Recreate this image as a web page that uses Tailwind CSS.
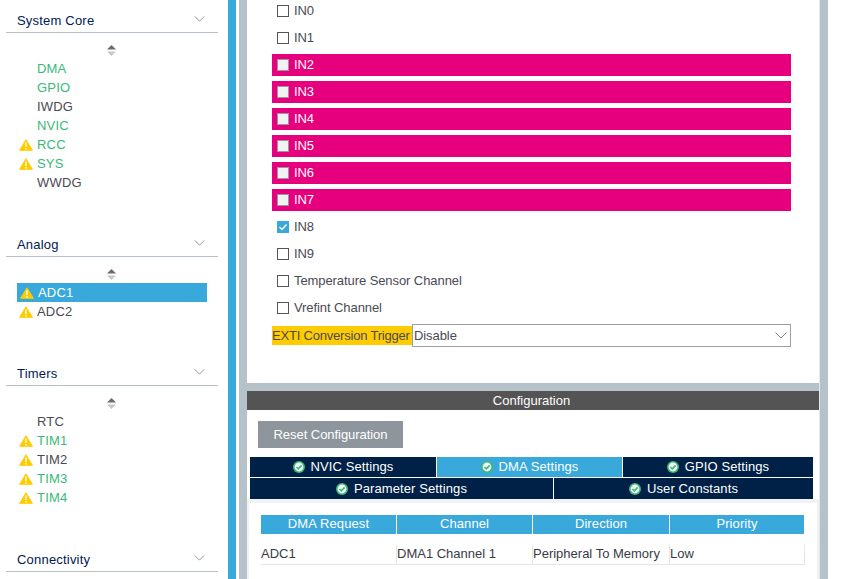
<!DOCTYPE html>
<html lang="en">
<head>
  <meta charset="UTF-8">
  <title>Pinout and Configuration</title>
  <script src="https://cdn.jsdelivr.net/npm/@tailwindcss/browser@4"></script>
</head>
<body class="bg-white font-['Liberation_Sans',Arial,sans-serif] text-[13px] text-[#4a4a55]">
  <svg width="0" height="0" class="absolute">
    <defs>
      <symbol id="warn" viewBox="0 0 14 12">
        <path d="M7 0.8 L13.4 11.3 L0.6 11.3 Z" fill="#ffcc00" stroke="#ffcc00" stroke-linejoin="round"/>
        <path d="M7 3.5 V8" stroke="#fff" stroke-width="1.4"/>
        <path d="M7 9 V10.4" stroke="#fff" stroke-width="1.4"/>
      </symbol>
      <symbol id="ok" viewBox="0 0 12 12">
        <circle cx="6" cy="6" r="6" fill="#3cb878"/>
        <circle cx="6" cy="6" r="4.4" fill="#f4fbf7"/>
        <path d="M3.4 6 L5.3 7.9 L8.7 4.4" fill="none" stroke="#3cb878" stroke-width="1.6"/>
      </symbol>
      <symbol id="chev" viewBox="0 0 12 7">
        <path d="M0.5 0.5 L6 6 L11.5 0.5" fill="none" stroke="#7b8a96" stroke-width="1"/>
      </symbol>
      <symbol id="spin" viewBox="0 0 9 11">
        <path d="M4.5 0 L9 4.5 H0 Z" fill="#6b6b6b"/>
        <path d="M4.5 11 L9 6.5 H0 Z" fill="#c4c8cc"/>
      </symbol>
    </defs>
  </svg>

  <div class="flex h-[579px] w-[854px] overflow-hidden">
    <!-- left category list -->
    <aside class="w-[228px] shrink-0 pl-[6px] pr-[10px] tracking-[0.2px]">
      <section class="h-[33px] flex items-center justify-between border-b border-[#b5c0c8] pt-[9px] pl-[11px] pr-[13px] text-[#002052]">
        <span>System Core</span>
        <svg class="w-[11px] h-[6px] mb-[4px]"><use href="#chev"/></svg>
      </section>
      <div class="h-[191px]">
        <div class="flex justify-center pt-[12px] pb-[3px] pr-[2px]"><svg class="w-[9px] h-[11px]"><use href="#spin"/></svg></div>
        <ul class="pl-[13px] leading-[19px]">
          <li class="pl-[18px] text-[#3cb878]">DMA</li>
          <li class="pl-[18px] text-[#3cb878]">GPIO</li>
          <li class="pl-[18px]">IWDG</li>
          <li class="pl-[18px] text-[#3cb878]">NVIC</li>
          <li class="flex items-center gap-[4px] text-[#3cb878]"><svg class="w-[14px] h-[12px]"><use href="#warn"/></svg>RCC</li>
          <li class="flex items-center gap-[4px] text-[#3cb878]"><svg class="w-[14px] h-[12px]"><use href="#warn"/></svg>SYS</li>
          <li class="pl-[18px]">WWDG</li>
        </ul>
      </div>

      <section class="h-[33px] flex items-center justify-between border-b border-[#b5c0c8] pt-[9px] pl-[11px] pr-[13px] text-[#002052]">
        <span>Analog</span>
        <svg class="w-[11px] h-[6px] mb-[4px]"><use href="#chev"/></svg>
      </section>
      <div class="h-[96px]">
        <div class="flex justify-center pt-[12px] pb-[3px] pr-[2px]"><svg class="w-[9px] h-[11px]"><use href="#spin"/></svg></div>
        <ul class="pl-[11px] pr-[11px] leading-[19px]">
          <li class="flex items-center gap-[4px] bg-[#39a9dc] text-white pl-[3px]"><svg class="w-[14px] h-[12px]"><use href="#warn"/></svg>ADC1</li>
          <li class="flex items-center gap-[4px] pl-[2px]"><svg class="w-[14px] h-[12px]"><use href="#warn"/></svg>ADC2</li>
        </ul>
      </div>

      <section class="h-[33px] flex items-center justify-between border-b border-[#b5c0c8] pt-[9px] pl-[11px] pr-[13px] text-[#002052]">
        <span>Timers</span>
        <svg class="w-[11px] h-[6px] mb-[4px]"><use href="#chev"/></svg>
      </section>
      <div class="h-[153px]">
        <div class="flex justify-center pt-[12px] pb-[3px] pr-[2px]"><svg class="w-[9px] h-[11px]"><use href="#spin"/></svg></div>
        <ul class="pl-[13px] leading-[19px]">
          <li class="pl-[18px]">RTC</li>
          <li class="flex items-center gap-[4px] text-[#3cb878]"><svg class="w-[14px] h-[12px]"><use href="#warn"/></svg>TIM1</li>
          <li class="flex items-center gap-[4px]"><svg class="w-[14px] h-[12px]"><use href="#warn"/></svg>TIM2</li>
          <li class="flex items-center gap-[4px] text-[#3cb878]"><svg class="w-[14px] h-[12px]"><use href="#warn"/></svg>TIM3</li>
          <li class="flex items-center gap-[4px] text-[#3cb878]"><svg class="w-[14px] h-[12px]"><use href="#warn"/></svg>TIM4</li>
        </ul>
      </div>

      <section class="h-[33px] flex items-center justify-between border-b border-[#b5c0c8] pt-[9px] pl-[11px] pr-[13px] text-[#002052]">
        <span>Connectivity</span>
        <svg class="w-[11px] h-[6px] mb-[4px]"><use href="#chev"/></svg>
      </section>
    </aside>

    <div class="w-[8px] shrink-0 bg-[#39a9dc]"></div>
    <div class="w-[3px] shrink-0"></div>
    <div class="w-[8px] shrink-0 bg-[#b5c2ca]"></div>

    <main class="w-[573px] shrink-0 flex flex-col border-r border-[#e4e8ea]">
      <!-- mode panel -->
      <div class="h-[383px] pl-[25px] pr-[28px] overflow-hidden tracking-[-0.08px]">
        <div class="flex flex-col gap-[5px]">
          <label class="h-[22px] flex items-center gap-[5px] pl-[5px]"><span class="w-[12px] h-[12px] border border-[#555]"></span>IN0</label>
          <label class="h-[22px] flex items-center gap-[5px] pl-[5px]"><span class="w-[12px] h-[12px] border border-[#555]"></span>IN1</label>
          <label class="h-[22px] flex items-center gap-[5px] pl-[5px] bg-[#e6007e] text-white"><span class="w-[12px] h-[12px] border border-[#999] bg-[#f0f2f4]"></span>IN2</label>
          <label class="h-[22px] flex items-center gap-[5px] pl-[5px] bg-[#e6007e] text-white"><span class="w-[12px] h-[12px] border border-[#999] bg-[#f0f2f4]"></span>IN3</label>
          <label class="h-[22px] flex items-center gap-[5px] pl-[5px] bg-[#e6007e] text-white"><span class="w-[12px] h-[12px] border border-[#999] bg-[#f0f2f4]"></span>IN4</label>
          <label class="h-[22px] flex items-center gap-[5px] pl-[5px] bg-[#e6007e] text-white"><span class="w-[12px] h-[12px] border border-[#999] bg-[#f0f2f4]"></span>IN5</label>
          <label class="h-[22px] flex items-center gap-[5px] pl-[5px] bg-[#e6007e] text-white"><span class="w-[12px] h-[12px] border border-[#999] bg-[#f0f2f4]"></span>IN6</label>
          <label class="h-[22px] flex items-center gap-[5px] pl-[5px] bg-[#e6007e] text-white"><span class="w-[12px] h-[12px] border border-[#999] bg-[#f0f2f4]"></span>IN7</label>
          <label class="h-[22px] flex items-center gap-[5px] pl-[5px]">
            <span class="w-[12px] h-[12px] bg-[#39a9dc] flex items-center justify-center">
              <svg width="10" height="10" viewBox="0 0 10 10"><path d="M1.5 5 L4 7.5 L8.5 2.5" fill="none" stroke="#fff" stroke-width="1.4"/></svg>
            </span>IN8</label>
          <label class="h-[22px] flex items-center gap-[5px] pl-[5px]"><span class="w-[12px] h-[12px] border border-[#555]"></span>IN9</label>
          <label class="h-[22px] flex items-center gap-[5px] pl-[5px]"><span class="w-[12px] h-[12px] border border-[#555]"></span>Temperature Sensor Channel</label>
          <label class="h-[22px] flex items-center gap-[5px] pl-[5px]"><span class="w-[12px] h-[12px] border border-[#555]"></span>Vrefint Channel</label>
        </div>
        <div class="flex items-center mt-[5px]">
          <span class="w-[140px] h-[19px] leading-[19px] bg-[#ffcc00] whitespace-nowrap tracking-[-0.2px]">EXTI Conversion Trigger</span>
          <div class="flex-1 h-[23px] border border-[#9aa0a4] flex items-center justify-between pl-[1px] pr-[3px]">
            <span>Disable</span>
            <svg class="w-[12px] h-[7px]"><use href="#chev"/></svg>
          </div>
        </div>
      </div>

      <div class="h-[8px] bg-[#b5c2ca]"></div>

      <!-- configuration panel -->
      <div class="h-[19px] leading-[19px] bg-[#545454] text-white text-center pr-[3px]">Configuration</div>
      <div class="pt-[11px] pl-[11px]">
        <button class="block w-[145px] h-[27px] bg-[#8e959c] text-white tracking-[-0.05px]">Reset Configuration</button>
      </div>
      <div class="mt-[9px] pl-[3px] pr-[6px] flex flex-col gap-[1px] text-white tracking-[0.1px]">
        <div class="flex gap-[1px] h-[20px]">
          <div class="w-[186px] bg-[#002147] flex items-center justify-center gap-[6px]"><svg class="w-[12px] h-[12px]"><use href="#ok"/></svg>NVIC Settings</div>
          <div class="w-[185px] bg-[#39a9dc] flex items-center justify-center gap-[6px]"><svg class="w-[12px] h-[12px]"><use href="#ok"/></svg>DMA Settings</div>
          <div class="flex-1 bg-[#002147] flex items-center justify-center gap-[6px]"><svg class="w-[12px] h-[12px]"><use href="#ok"/></svg>GPIO Settings</div>
        </div>
        <div class="flex gap-[1px] h-[21px]">
          <div class="w-[303px] bg-[#002147] flex items-center justify-center gap-[6px]"><svg class="w-[12px] h-[12px]"><use href="#ok"/></svg>Parameter Settings</div>
          <div class="flex-1 bg-[#002147] flex items-center justify-center gap-[6px]"><svg class="w-[12px] h-[12px]"><use href="#ok"/></svg>User Constants</div>
        </div>
      </div>
      <div class="flex-1 bg-[#f0f2f4] pt-[4px] pl-[2px] pr-[2px]">
        <div class="h-full bg-white pt-[12px] pl-[12px] pr-[12px]">
          <div class="grid grid-cols-[135px_135px_136px_134px] gap-x-[1px] text-white text-center tracking-[0.1px]">
            <div class="h-[19px] leading-[18px] bg-[#39a9dc]">DMA Request</div>
            <div class="h-[19px] leading-[18px] bg-[#39a9dc]">Channel</div>
            <div class="h-[19px] leading-[18px] bg-[#39a9dc]">Direction</div>
            <div class="h-[19px] leading-[18px] bg-[#39a9dc]">Priority</div>
          </div>
          <div class="mt-[11px] grid grid-cols-[136px_136px_137px_135px] border-b border-[#e4e6e8] h-[20px] leading-[18px] text-[#3a3a48]">
            <div class="border-r border-[#e4e6e8]">ADC1</div>
            <div class="border-r border-[#e4e6e8]">DMA1 Channel 1</div>
            <div class="border-r border-[#e4e6e8]">Peripheral To Memory</div>
            <div class="border-r border-[#e4e6e8]">Low</div>
          </div>
        </div>
      </div>
    </main>

    <div class="w-[8px] shrink-0 bg-[#b5c2ca]"></div>
    <div class="flex-1"></div>
  </div>
</body>
</html>
